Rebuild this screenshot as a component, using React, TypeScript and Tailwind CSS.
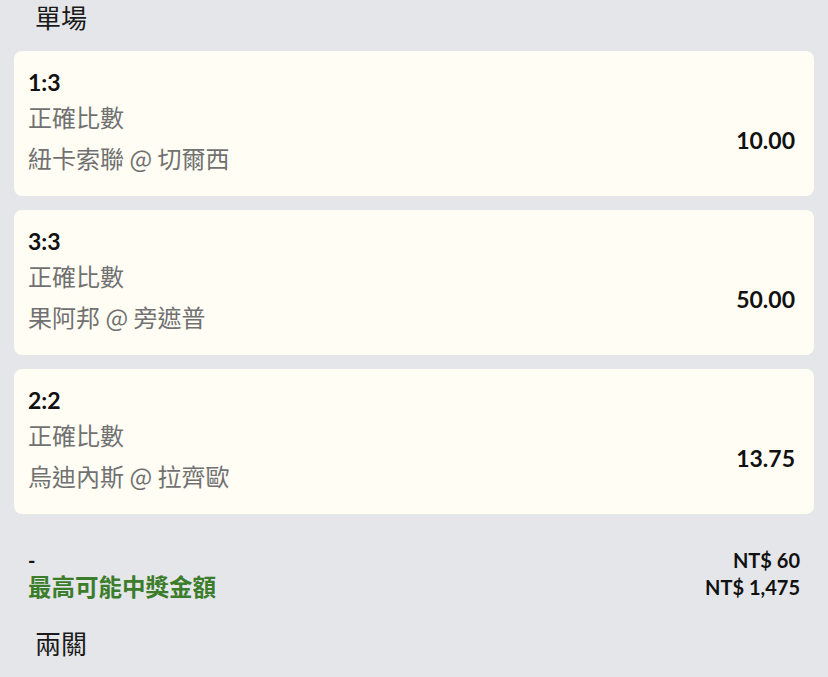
const bets = [
  { score: "1:3", market: "正確比數", match: "紐卡索聯 @ 切爾西", odds: "10.00" },
  { score: "3:3", market: "正確比數", match: "果阿邦 @ 旁遮普", odds: "50.00" },
  { score: "2:2", market: "正確比數", match: "烏迪內斯 @ 拉齊歐", odds: "13.75" },
];

const font = "font-['Lato','Noto_Sans_CJK_TC',sans-serif]";
const cjk = "font-['Noto_Sans_CJK_TC',sans-serif]";

export default function App() {
  return (
    <div className={`min-h-[677px] w-[828px] bg-[#e5e6e9] ${font}`}>
      <div className="px-[35px] pt-[2px] text-[26px] leading-[32px] text-[#1a1a1a]">單場</div>
      <div className="mt-[17px] flex flex-col gap-[14px] px-[14px]">
        {bets.map((b) => (
          <div
            key={b.score}
            className="flex h-[145px] items-center justify-between rounded-[8px] bg-[#fffdf4] pl-[14px] pr-[19px]"
          >
            <div className="-mt-[6px] flex flex-col">
              <div className="text-[23px] font-bold leading-[30px] text-[#111]">{b.score}</div>
              <div className={`mt-[3px] text-[24px] leading-[34px] text-[#717171] ${cjk}`}>{b.market}</div>
              <div className={`mt-[7px] text-[24px] leading-[34px] text-[#717171] ${cjk}`}>{b.match}</div>
            </div>
            <div className="mt-[33px] text-[23px] font-bold text-[#111]">{b.odds}</div>
          </div>
        ))}
      </div>
      <div className="mt-[33px] flex justify-between px-[28px]">
        <div className="flex flex-col">
          <div className="text-[20px] font-bold leading-[26px] text-[#111]">-</div>
          <div className="text-[23.5px] font-bold leading-[28px] text-[#3b7d2b]">最高可能中獎金額</div>
        </div>
        <div className="flex flex-col items-end">
          <div className="text-[20px] font-bold leading-[26px] text-[#111]">NT$ 60</div>
          <div className="text-[20px] font-bold leading-[28px] text-[#111]">NT$ 1,475</div>
        </div>
      </div>
      <div className="mt-[27px] px-[35px] text-[26px] leading-[32px] text-[#1a1a1a]">兩關</div>
    </div>
  );
}
